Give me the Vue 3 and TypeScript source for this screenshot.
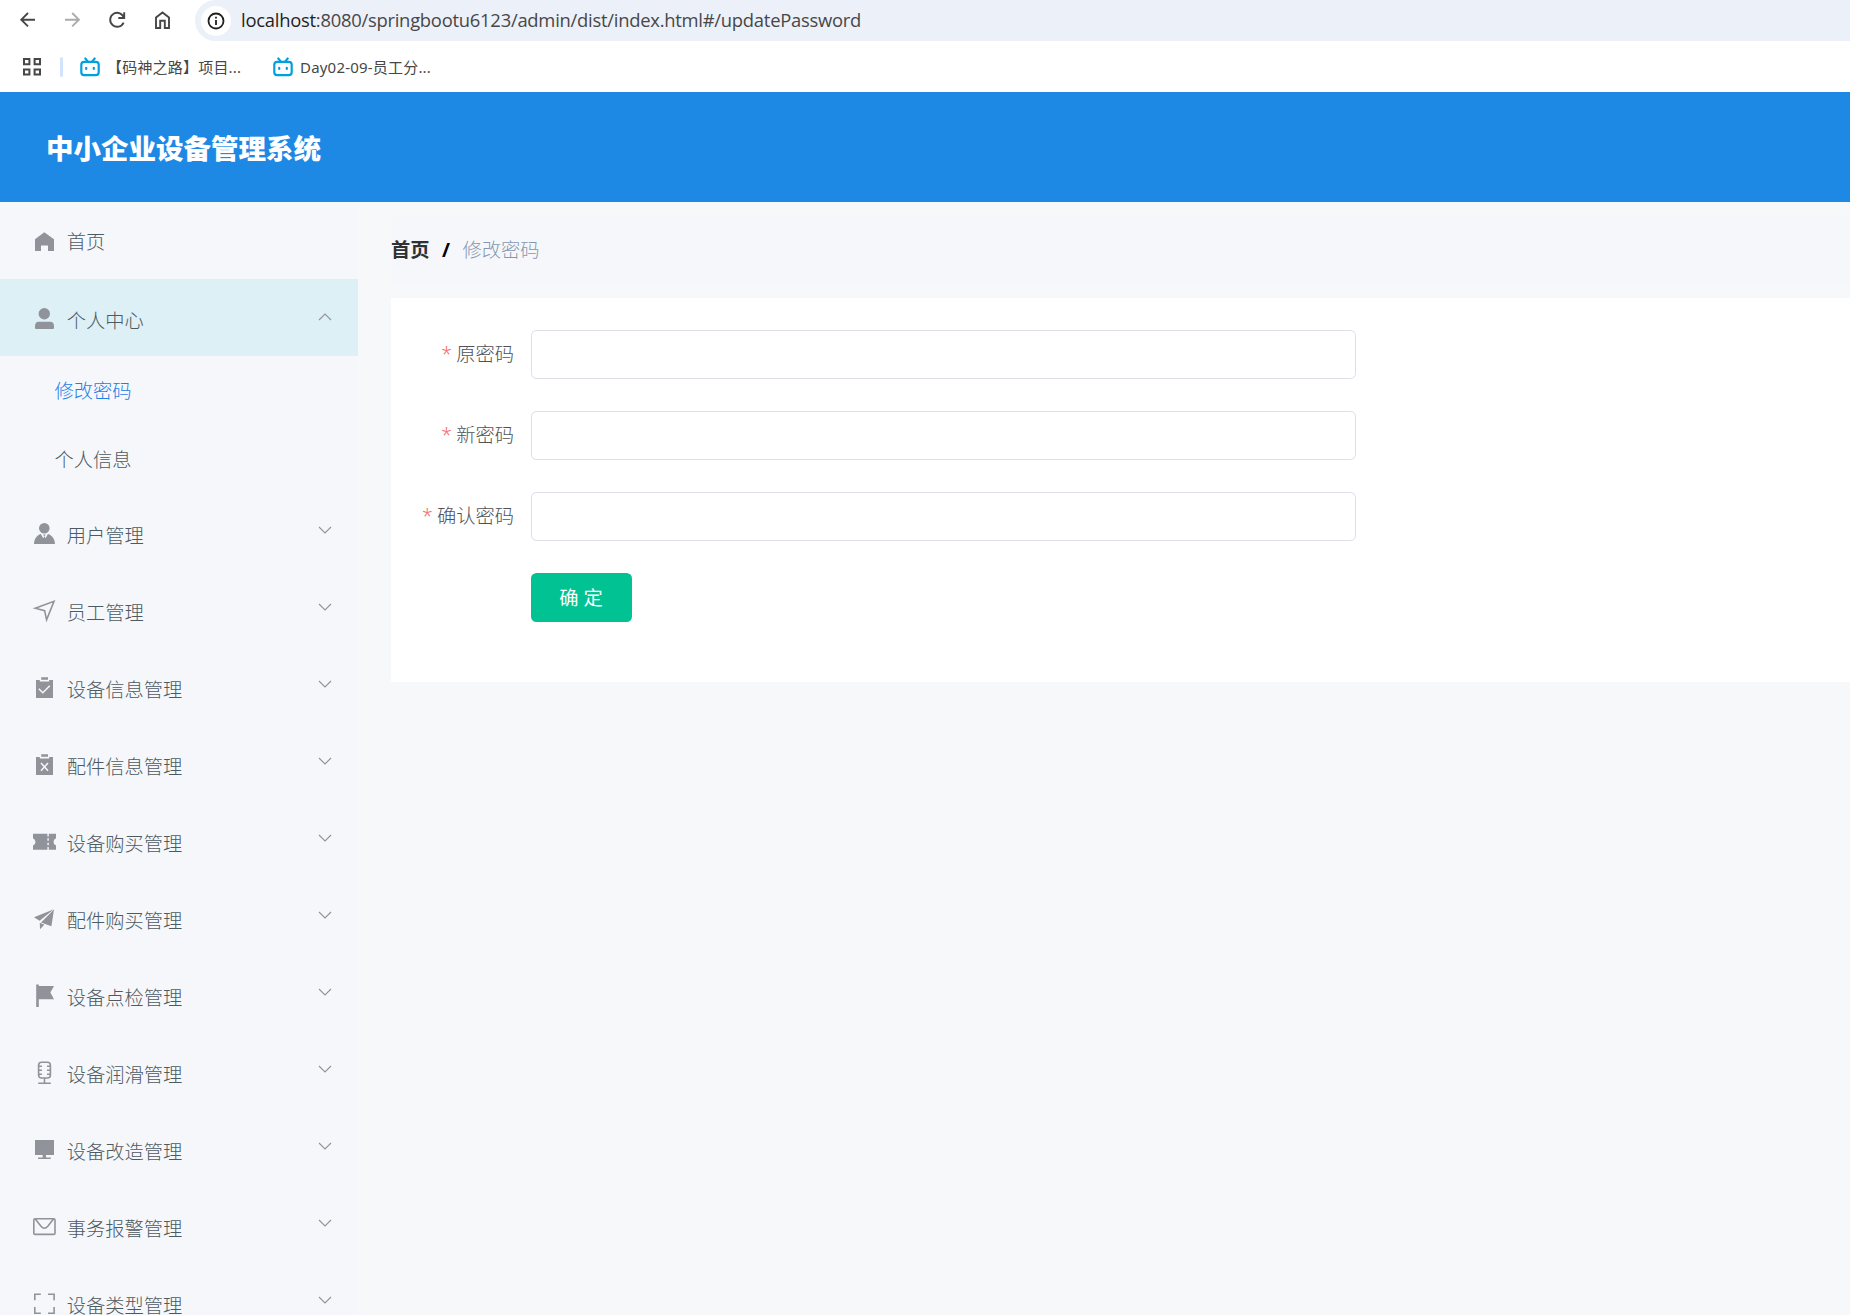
<script setup lang="ts">
interface MenuEntry {
  label: string
  icon: string
  children?: { label: string; active: boolean }[]
  leaf?: boolean
}

const menu: MenuEntry[] = [
  { label: '首页', icon: 'home', leaf: true },
  {
    label: '个人中心',
    icon: 'user',
    children: [
      { label: '修改密码', active: true },
      { label: '个人信息', active: false },
    ],
  },
  { label: '用户管理', icon: 'custom' },
  { label: '员工管理', icon: 'position' },
  { label: '设备信息管理', icon: 'claim' },
  { label: '配件信息管理', icon: 'release' },
  { label: '设备购买管理', icon: 'ticket' },
  { label: '配件购买管理', icon: 'promotion' },
  { label: '设备点检管理', icon: 'flag' },
  { label: '设备润滑管理', icon: 'microphone' },
  { label: '设备改造管理', icon: 'platform' },
  { label: '事务报警管理', icon: 'message' },
  { label: '设备类型管理', icon: 'fullscreen' },
]

const solid: Record<string, string> = {
  home: 'M12.3 2.3L22 9.2V21H16V15.5H9V21H3V9.2Z',
  user: 'M12.3 1a5.7 5.7 0 1 1 0 11.4a5.7 5.7 0 0 1 0-11.4ZM7 14.7H18Q22 14.7 22 19V21Q22 22 21 22H4Q3 22 3 21V19Q3 14.7 7 14.7Z',
  custom: 'M12.3 1a5.3 5.3 0 1 1 0 10.6a5.3 5.3 0 0 1 0-10.6ZM8.8 11.9L11.2 16.2L12.3 14.4L11.2 12.6H13.6L12.5 14.4L13.5 16.2L15.9 11.9C20.4 13.2 22.8 17 23 22H2C2.2 17 4.5 13.2 8.8 11.9Z',
  claim: 'M4 4H7.8V5.4H17.2V4H21V22H4ZM9.2 1.2H16V3.8H9.2Z',
  release: 'M4 4H7.8V5.4H17.2V4H21V22H4ZM9.2 1.2H16V3.8H9.2Z',
  ticket: 'M1 3.8H15.4V6.5H16.8V3.8H24V8.2A4 4 0 0 0 24 15.6V19.8H16.8V17H15.4V19.8H1V15.6A4 4 0 0 0 1 8.2ZM15.4 8.3V10.8H16.8V8.3ZM15.4 12.8V15.3H16.8V12.8Z',
  promotion: 'M21.9 2.2L2 10.2L7.6 13.7ZM22 2.5L19.4 19.2L9 15.4ZM7.8 15.8L12.3 17.8L8 22.2Z',
  flag: 'M4.2 .5H6.8V2H22L18.4 8.5L22 15.2H6.8V23H4.2Z',
  platform: 'M3 2H22V17H14V19.5H18.7V21H6V19.5H10.6V17H3Z',
}

const line: Record<string, string> = {
  position: 'M3.2 9.2L22 2.3L14.6 20.8L12.6 11.6Z',
  microphone:
    'M9.6 1.2H15.4Q18.4 1.2 18.4 4.2V14Q18.4 17 15.4 17H9.6Q6.6 17 6.6 14V4.2Q6.6 1.2 9.6 1.2ZM6.6 5.2H10M6.6 9.2H10M6.6 13.2H10M18.4 5.2H15M18.4 9.2H15M18.4 13.2H15M12.5 17V22.3M6.2 22.3H18.8',
  message: 'M3 3.8H21.8Q23 3.8 23 5V18.2Q23 19.4 21.8 19.4H3Q1.8 19.4 1.8 18.2V5Q1.8 3.8 3 3.8ZM3.5 4.2L9 11.2Q12.4 15.2 15.8 11.2L21.3 4.2',
  fullscreen: 'M2.8 8.3V2.2H8.8M16 2.2H22.1V8.3M22.1 15V21.2H16M8.8 21.2H2.8V15',
}

const mark: Record<string, string> = {
  claim: 'M6.8 12.8L10.8 16.8L17.8 9.8',
  release: 'M9 9.9L16 17.7M16 9.9L9 17.7',
}

const fields = ['原密码', '新密码', '确认密码']
const bookmarks = ['【码神之路】项目...', 'Day02-09-员工分...']
</script>

<template>
  <div class="screen">
    <div class="toolbar">
      <svg class="nav" width="190" height="41" viewBox="0 0 190 41" fill="none" stroke="#474747" stroke-width="1.9">
        <path d="M35 19.7H21.5M28 13L21.3 19.7L28 26.4" />
        <path stroke="#ababab" d="M65 19.7H78.7M72.2 13L78.9 19.7L72.2 26.4" />
        <path d="M124 18.2A7 7 0 1 0 123.6 22.6M124.2 12.2V18H118.3" />
        <path d="M156 28V17.5L162.5 12.5L169 17.5V28H164.8V20.8H160.2V28Z" />
      </svg>
      <div class="address">
        <span class="info">
          <svg width="18" height="18" viewBox="0 0 18 18" fill="none" stroke="#1f1f1f" stroke-width="1.8">
            <circle cx="9" cy="9" r="7.5" />
            <path d="M9 8V13M9 4.8V6.6" />
          </svg>
        </span>
        <span class="url"><b>localhost</b>:8080/springbootu6123/admin/dist/index.html#/updatePassword</span>
      </div>
    </div>
    <div class="bookmarks">
      <svg class="apps" width="18" height="18" viewBox="0 0 18 18" fill="none" stroke="#474747" stroke-width="2">
        <path d="M1 1H6.4V6.2H1ZM11.6 1H17V6.2H11.6ZM1 11.4H6.4V16.6H1ZM11.6 11.4H17V16.6H11.6Z" />
      </svg>
      <i class="divider"></i>
      <div v-for="b in bookmarks" :key="b" class="bookmark">
        <svg width="20" height="20" viewBox="0 0 20 20" fill="none" stroke="#00a1dc" stroke-width="2.2" stroke-linecap="round">
          <rect x="1.3" y="4.9" width="17.4" height="13.2" rx="2.8" />
          <path d="M5.3 1.5L7.5 4.1M14.7 1.5L12.5 4.1M6.2 10.8V12M13.8 10.8V12" />
        </svg>
        <span>{{ b }}</span>
      </div>
    </div>

    <header class="header"><h1>中小企业设备管理系统</h1></header>

    <div class="body">
      <aside class="sidebar">
        <template v-for="item in menu" :key="item.label">
          <div class="item" :class="{ open: item.children, leaf: item.leaf }">
            <svg class="icon" width="25" height="24" viewBox="0 0 25 24">
              <path v-if="solid[item.icon]" :d="solid[item.icon]" fill="#909399" fill-rule="evenodd" />
              <path v-if="line[item.icon]" :d="line[item.icon]" fill="none" stroke="#909399" stroke-width="1.6" />
              <path v-if="mark[item.icon]" :d="mark[item.icon]" fill="none" stroke="#f5f7fb" stroke-width="1.5" />
            </svg>
            <span class="label">{{ item.label }}</span>
            <svg v-if="!item.leaf" class="arrow" width="14" height="8" viewBox="0 0 14 8" fill="none" stroke="#909399" stroke-width="1.1">
              <path :d="item.children ? 'M1 7L7 1L13 7' : 'M1 1L7 7L13 1'" />
            </svg>
          </div>
          <div v-for="c in item.children" :key="c.label" class="sub" :class="{ active: c.active }">{{ c.label }}</div>
        </template>
      </aside>

      <main class="main">
        <nav class="crumbs"><b>首页</b><i>/</i><span>修改密码</span></nav>
        <form class="card" @submit.prevent>
          <div v-for="f in fields" :key="f" class="row">
            <label><em>*</em>{{ f }}</label>
            <input type="password" />
          </div>
          <div class="row"><label></label><button type="button">确 定</button></div>
        </form>
      </main>
    </div>
  </div>
</template>

<style>
body {
  margin: 0;
  overflow: hidden;
}
</style>

<style scoped>
.screen {
  width: 1850px;
  height: 1315px;
  overflow: hidden;
  display: flex;
  flex-direction: column;
  background: #fff;
  font-family: 'Noto Sans', 'Noto Sans CJK SC', sans-serif;
  font-size: 19.25px;
}
.toolbar {
  height: 41px;
  display: flex;
  flex: none;
}
.nav {
  flex: none;
  margin-right: 5px;
}
.address {
  flex: 1;
  display: flex;
  align-items: center;
  background: #ecf0f9;
  border-radius: 21px 0 0 21px;
  padding-left: 6px;
}
.info {
  width: 30px;
  height: 30px;
  border-radius: 50%;
  background: #fff;
  display: flex;
  align-items: center;
  justify-content: center;
}
.url {
  margin-left: 10px;
  padding-bottom: 2px;
  font-family: 'Open Sans', sans-serif;
  font-size: 18.4px;
  letter-spacing: -0.25px;
  color: #474747;
  white-space: nowrap;
}
.url b {
  font-weight: 400;
  color: #1f1f1f;
}
.bookmarks {
  height: 51px;
  flex: none;
  display: flex;
  align-items: center;
  box-sizing: border-box;
  padding: 0 0 0 23px;
}
.divider {
  width: 3px;
  height: 20px;
  border-radius: 2px;
  background: #d3e3fd;
  margin: 0 17px 0 19px;
}
.bookmark {
  display: flex;
  align-items: center;
  width: 193px;
  font-size: 15px;
  letter-spacing: 0.2px;
  color: #474747;
  white-space: nowrap;
}
.bookmark span {
  margin-left: 7px;
}
.header {
  height: 110px;
  flex: none;
  background: #1e88e5;
  display: flex;
  align-items: center;
  padding-left: 46px;
}
h1 {
  margin: 4px 0 0;
  color: #fff;
  font-size: 27.5px;
  line-height: 40px;
  font-weight: 900;
}
.body {
  flex: 1;
  min-height: 0;
  display: flex;
  background: #f6f8fa;
}
.sidebar {
  width: 358px;
  flex: none;
  overflow: hidden;
  background: #f5f7fb;
  color: #4c5a61;
  font-weight: 300;
}
.item {
  height: 77px;
  box-sizing: border-box;
  display: flex;
  align-items: flex-start;
  padding: 0 26.5px 0 32px;
}
.item.open {
  background: #ddf0f6;
}
.icon {
  margin-top: 28px;
  flex: none;
}
.label {
  margin-left: 9.8px;
  flex: 1;
  line-height: 77px;
  padding-top: 3px;
}
.leaf .label {
  padding-top: 1px;
}
.arrow {
  margin-top: 32px;
}
.open .arrow {
  margin-top: 34px;
}
.sub {
  height: 68.75px;
  box-sizing: border-box;
  padding-top: 1px;
  line-height: 67.75px;
  padding-left: 54.5px;
}
.sub.active {
  color: #1e80e5;
}
.main {
  flex: 1;
  padding: 14px 0 0 33px;
}
.crumbs {
  height: 69px;
  box-sizing: border-box;
  padding-bottom: 3px;
  display: flex;
  align-items: center;
  background: #f5f7fb;
  color: #303133;
}
.crumbs i {
  margin: 0 12.5px;
  font-style: normal;
  font-weight: 700;
  color: #000;
}
.crumbs span {
  color: #8597b0;
  font-weight: 300;
}
.card {
  margin-top: 13px;
  height: 384px;
  box-sizing: border-box;
  background: #fff;
  padding-top: 32px;
  display: flex;
  flex-direction: column;
  gap: 32px;
}
.row {
  display: flex;
  height: 49px;
}
label {
  width: 140px;
  box-sizing: border-box;
  padding-right: 17px;
  text-align: right;
  line-height: 48px;
  color: #505256;
  font-weight: 300;
}
em {
  font-style: normal;
  color: #f56c6c;
  margin-right: 4.5px;
}
input {
  width: 825px;
  height: 49px;
  box-sizing: border-box;
  border: 1px solid #dcdfe6;
  border-radius: 5.5px;
  background: #fff;
  outline: none;
}
button {
  width: 101px;
  height: 49px;
  border: 0;
  padding: 0 1px 2px 0;
  border-radius: 5.5px;
  background: #00c292;
  color: #fff;
  font: inherit;
}
</style>
